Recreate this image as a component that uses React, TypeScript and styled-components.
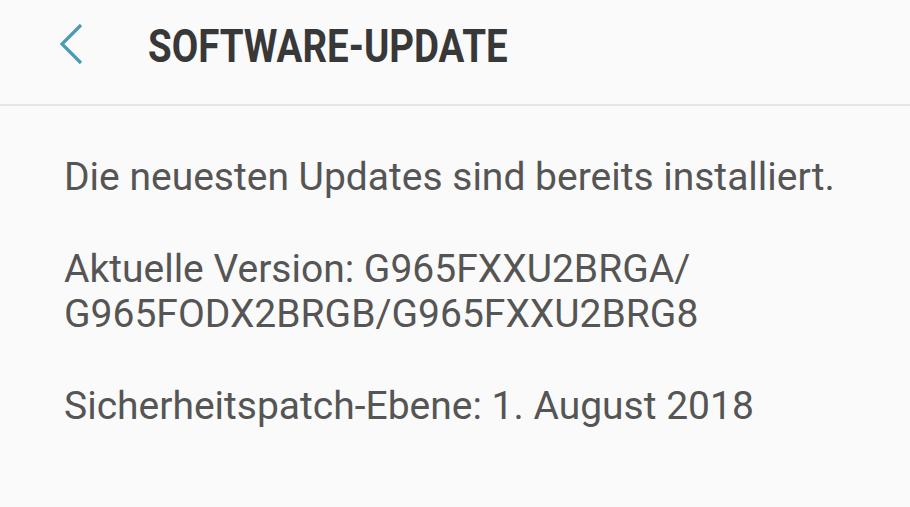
import * as React from 'react';
import styled, { createGlobalStyle } from 'styled-components';

const GlobalStyle = createGlobalStyle`
  html, body {
    margin: 0;
    padding: 0;
    background: #fafafa;
  }
  body {
    font-family: Roboto, "Liberation Sans", sans-serif;
  }
`;

const lines = [
  ['Die neuesten Updates sind bereits installiert.'],
  ['Aktuelle Version: G965FXXU2BRGA/', 'G965FODX2BRGB/G965FXXU2BRG8'],
  ['Sicherheitspatch-Ebene: 1. August 2018'],
];

export default function App() {
  return (
    <Screen>
      <GlobalStyle />
      <Header>
        <BackButton aria-label="Zurück">
          <svg width="26" height="42" viewBox="0 0 26 42">
            <polyline points="23,2 4,21 23,40" fill="none" stroke="#4b9bb5" strokeWidth="3.2" />
          </svg>
        </BackButton>
        <Title><span>SOFTWARE-UPDATE</span></Title>
      </Header>
      <Content>
        {lines.map((para, i) => (
          <Paragraph key={i}>
            {para.map((line, j) => (
              <Line key={j}>{line}</Line>
            ))}
          </Paragraph>
        ))}
      </Content>
    </Screen>
  );
}

const Screen = styled.div`
  width: 910px;
  height: 507px;
  overflow: hidden;
  background: #fafafa;
`;

const Header = styled.header`
  display: flex;
  align-items: flex-start;
  height: 106px;
  box-sizing: border-box;
  padding: 0 0 0 58px;
  border-bottom: 2px solid #e6e6e6;
`;

const BackButton = styled.div`
  display: flex;
  width: 26px;
  height: 42px;
  margin-top: 23px;
`;

const Title = styled.h1`
  margin: 23px 0 0 64px;
  font-size: 46px;
  line-height: 46px;
  font-weight: 700;
  color: #383838;

  > span {
    display: inline-block;
    transform: scaleX(0.836);
    transform-origin: left center;
  }
`;

const Content = styled.main`
  padding: 49px 0 0 64px;
  color: #555555;
  font-size: 39px;
  line-height: 45px;
`;

const Paragraph = styled.p`
  margin: 0 0 47px;
`;

const Line = styled.span`
  display: block;
  white-space: nowrap;
`;
